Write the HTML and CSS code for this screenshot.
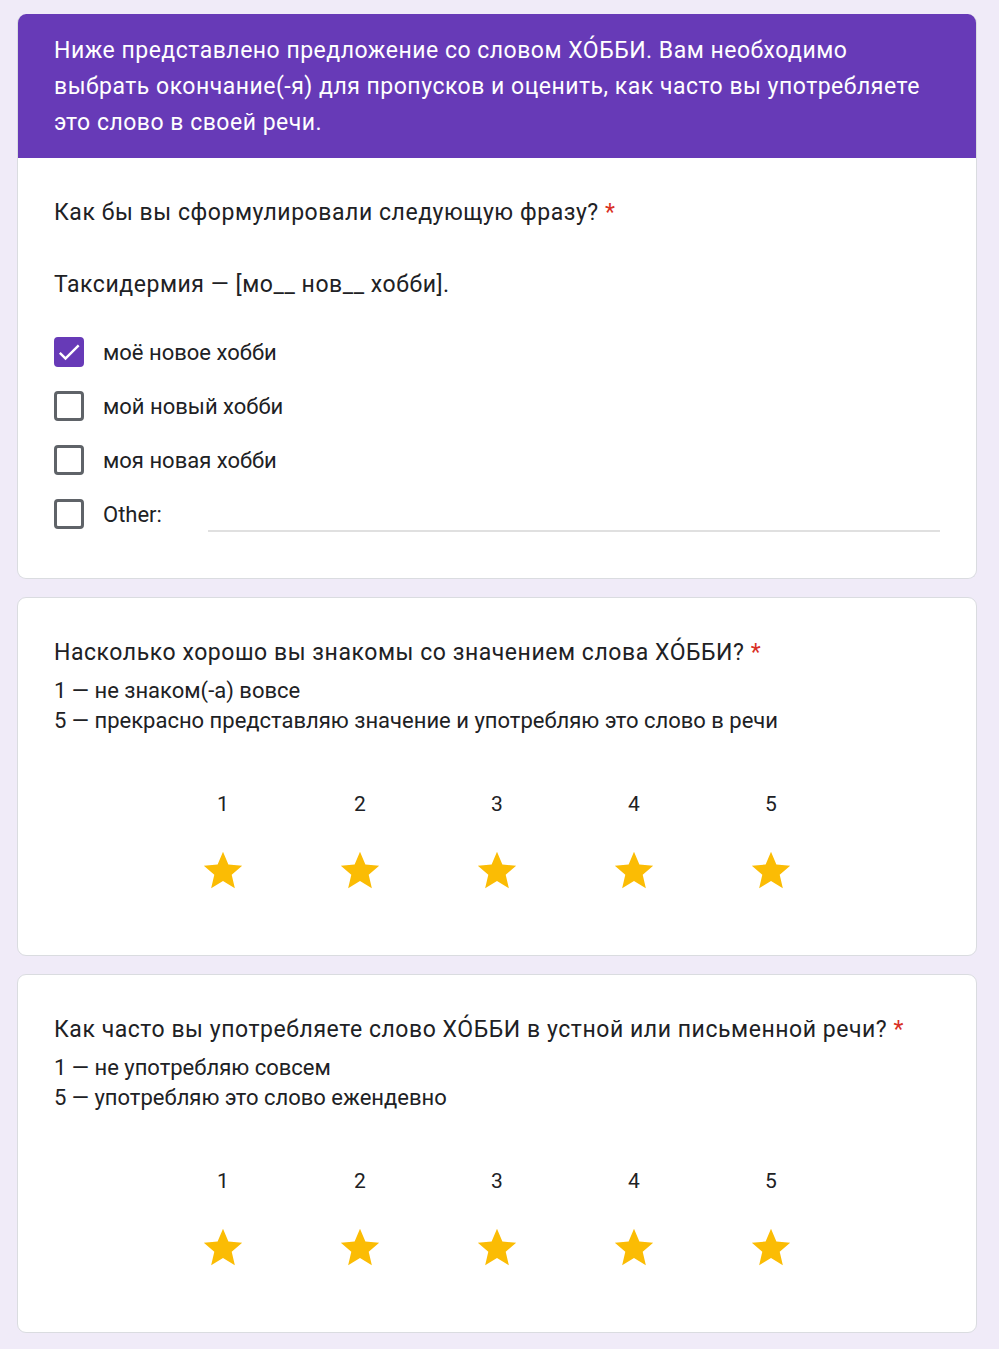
FILE: index.html
```html
<!DOCTYPE html>
<html lang="ru">
<head>
<meta charset="utf-8">
<link rel="stylesheet" href="styles.css">
</head>
<body>
<main class="form">
  <section class="card first">
    <div class="header">Ниже представлено предложение со словом ХО́ББИ. Вам необходимо выбрать окончание(-я) для пропусков и оценить, как часто вы употребляете это слово в своей речи.</div>
    <div class="body">
      <div class="title">Как бы вы сформулировали следующую фразу? <span class="req">*</span><br><br>Таксидермия — [мо__ нов__ хобби].</div>
      <div class="options">
        <div class="option">
          <span class="box checked"><svg viewBox="0 0 24 24" width="28" height="28"><path d="M9 16.17L4.83 12l-1.42 1.41L9 19 21 7l-1.41-1.41z" fill="#fff"/></svg></span>
          <span class="label">моё новое хобби</span>
        </div>
        <div class="option">
          <span class="box"></span>
          <span class="label">мой новый хобби</span>
        </div>
        <div class="option">
          <span class="box"></span>
          <span class="label">моя новая хобби</span>
        </div>
        <div class="option">
          <span class="box"></span>
          <span class="label">Other:</span>
          <span class="other-line"></span>
        </div>
      </div>
    </div>
  </section>

  <section class="card">
    <div class="body">
      <div class="title">Насколько хорошо вы знакомы со значением слова ХО́ББИ? <span class="req">*</span></div>
      <div class="desc">1 — не знаком(-а) вовсе<br>5 — прекрасно представляю значение и употребляю это слово в речи</div>
      <div class="rating">
        <div class="rate"><span class="num">1</span><svg class="star" viewBox="0 0 24 24"><path d="M12 17.27L18.18 21l-1.64-7.03L22 9.24l-7.19-.61L12 2 9.19 8.63 2 9.24l5.46 4.73L5.82 21z"/></svg></div>
        <div class="rate"><span class="num">2</span><svg class="star" viewBox="0 0 24 24"><path d="M12 17.27L18.18 21l-1.64-7.03L22 9.24l-7.19-.61L12 2 9.19 8.63 2 9.24l5.46 4.73L5.82 21z"/></svg></div>
        <div class="rate"><span class="num">3</span><svg class="star" viewBox="0 0 24 24"><path d="M12 17.27L18.18 21l-1.64-7.03L22 9.24l-7.19-.61L12 2 9.19 8.63 2 9.24l5.46 4.73L5.82 21z"/></svg></div>
        <div class="rate"><span class="num">4</span><svg class="star" viewBox="0 0 24 24"><path d="M12 17.27L18.18 21l-1.64-7.03L22 9.24l-7.19-.61L12 2 9.19 8.63 2 9.24l5.46 4.73L5.82 21z"/></svg></div>
        <div class="rate"><span class="num">5</span><svg class="star" viewBox="0 0 24 24"><path d="M12 17.27L18.18 21l-1.64-7.03L22 9.24l-7.19-.61L12 2 9.19 8.63 2 9.24l5.46 4.73L5.82 21z"/></svg></div>
      </div>
    </div>
  </section>

  <section class="card">
    <div class="body">
      <div class="title">Как часто вы употребляете слово ХО́ББИ в устной или письменной речи? <span class="req">*</span></div>
      <div class="desc">1 — не употребляю совсем<br>5 — употребляю это слово ежендевно</div>
      <div class="rating">
        <div class="rate"><span class="num">1</span><svg class="star" viewBox="0 0 24 24"><path d="M12 17.27L18.18 21l-1.64-7.03L22 9.24l-7.19-.61L12 2 9.19 8.63 2 9.24l5.46 4.73L5.82 21z"/></svg></div>
        <div class="rate"><span class="num">2</span><svg class="star" viewBox="0 0 24 24"><path d="M12 17.27L18.18 21l-1.64-7.03L22 9.24l-7.19-.61L12 2 9.19 8.63 2 9.24l5.46 4.73L5.82 21z"/></svg></div>
        <div class="rate"><span class="num">3</span><svg class="star" viewBox="0 0 24 24"><path d="M12 17.27L18.18 21l-1.64-7.03L22 9.24l-7.19-.61L12 2 9.19 8.63 2 9.24l5.46 4.73L5.82 21z"/></svg></div>
        <div class="rate"><span class="num">4</span><svg class="star" viewBox="0 0 24 24"><path d="M12 17.27L18.18 21l-1.64-7.03L22 9.24l-7.19-.61L12 2 9.19 8.63 2 9.24l5.46 4.73L5.82 21z"/></svg></div>
        <div class="rate"><span class="num">5</span><svg class="star" viewBox="0 0 24 24"><path d="M12 17.27L18.18 21l-1.64-7.03L22 9.24l-7.19-.61L12 2 9.19 8.63 2 9.24l5.46 4.73L5.82 21z"/></svg></div>
      </div>
    </div>
  </section>
</main>
</body>
</html>
```

FILE: styles.css
```css
* { box-sizing: border-box; }
html, body {
  margin: 0;
  padding: 0;
  background: #f0ebf8;
}
body {
  font-family: Roboto, "Liberation Sans", sans-serif;
  color: #202124;
}
.form {
  width: 960px;
  margin: 14px 0 0 17px;
  display: flex;
  flex-direction: column;
  gap: 18px;
  padding-bottom: 20px;
}
.card {
  background: #fff;
  border: 1px solid #dadce0;
  border-radius: 9px;
  overflow: hidden;
}
.card.first {
  border-top: none;
}
.header {
  background: #673ab7;
  color: #fff;
  font-size: 23px;
  letter-spacing: 0.5px;
  line-height: 36px;
  padding: 19px 36px 17px 37px;
  margin: 0 -1px;
}
.body {
  padding: 37px 36px 0 36px;
}
.first .body {
  padding-top: 37px;
  padding-bottom: 49px;
}
.title {
  font-size: 23px;
  letter-spacing: 0.55px;
  line-height: 36px;
}
.req {
  color: #d93025;
  letter-spacing: 0;
}
.options {
  margin-top: 34px;
  display: flex;
  flex-direction: column;
  gap: 24px;
}
.option {
  display: flex;
  align-items: center;
  height: 30px;
}
.box {
  width: 30px;
  height: 30px;
  border: 3px solid #5f6368;
  border-radius: 4px;
  flex: none;
  display: flex;
  align-items: center;
  justify-content: center;
}
.box.checked {
  background: #673ab7;
  border-color: #673ab7;
}
.box svg {
  flex: none;
}
.label {
  margin-left: 19px;
  font-size: 22px;
}
.other-line {
  flex: 1;
  margin-left: 46px;
  align-self: flex-end;
  margin-bottom: -3px;
  border-bottom: 2px solid #e0e0e0;
}
.desc {
  font-size: 22px;
  line-height: 30px;
  margin-top: 5px;
}
.rating {
  display: flex;
  justify-content: center;
  padding: 55px 0 61px;
}
.rate {
  width: 137px;
  display: flex;
  flex-direction: column;
  align-items: center;
}
.num {
  font-size: 21px;
  line-height: 26px;
}
.star {
  width: 46px;
  height: 46px;
  margin-top: 31px;
  fill: #fbbc04;
}
```
